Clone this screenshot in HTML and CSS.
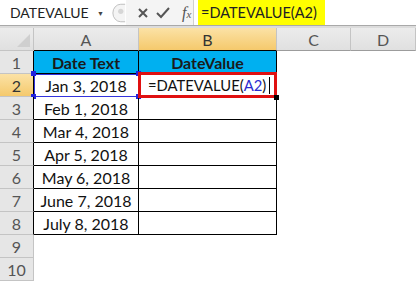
FILE: index.html
```html
<!DOCTYPE html>
<html lang="en">
<head>
    <meta charset="UTF-8">
    <title>DATEVALUE</title>
    <link rel="stylesheet" href="styles.css">
</head>
<body>

<div class="formula-bar">
    <div class="name-box">
        <span>DATEVALUE</span>
        <span class="arrow">&#9660;</span>
    </div>
    <div class="grip">
        <svg width="16" height="22" viewBox="0 0 16 22">
            <path d="M15 1 H10 A9 10 0 0 0 10 21 H15" fill="#f4f4f4" stroke="#b8b8b8"/>
            <circle cx="10" cy="9" r="3" fill="#d6d6d6"/>
        </svg>
    </div>
    <div class="tools">
        <svg class="ico" width="12" height="12" viewBox="0 0 12 12">
            <path d="M2 2 L10 10 M10 2 L2 10" stroke="#555" stroke-width="2"/>
        </svg>
        <svg class="ico" width="14" height="12" viewBox="0 0 14 12">
            <path d="M1 6 L5 10 L13 1" stroke="#555" stroke-width="2" fill="none"/>
        </svg>
        <span class="fx">f<small>x</small></span>
    </div>
    <div class="formula">
        <span class="hl">=DATEVALUE(A2)</span>
    </div>
</div>
<div class="gap"></div>

<div class="sheet">
    <div class="corner"></div>
    <div class="ch edge">A</div>
    <div class="ch sel edge">B</div>
    <div class="ch">C</div>
    <div class="ch">D</div>

    <div class="rh edge">1</div>
    <div class="cell t hd">Date Text</div>
    <div class="cell t hd">DateValue</div>
    <div class="cell"></div>
    <div class="cell"></div>

    <div class="rh sel edge">2</div>
    <div class="cell t ref">Jan 3, 2018
        <i class="dot tl"></i><i class="dot tr"></i><i class="dot bl"></i><i class="dot br"></i>
    </div>
    <div class="cell t active">=DATEVALUE(<span class="blue">A2</span>)<span class="caret"></span>
        <i class="handle"></i>
    </div>
    <div class="cell"></div>
    <div class="cell"></div>

    <div class="rh edge">3</div>
    <div class="cell t">Feb 1, 2018</div>
    <div class="cell t"></div>
    <div class="cell"></div>
    <div class="cell"></div>

    <div class="rh edge">4</div>
    <div class="cell t">Mar 4, 2018</div>
    <div class="cell t"></div>
    <div class="cell"></div>
    <div class="cell"></div>

    <div class="rh edge">5</div>
    <div class="cell t">Apr 5, 2018</div>
    <div class="cell t"></div>
    <div class="cell"></div>
    <div class="cell"></div>

    <div class="rh edge">6</div>
    <div class="cell t">May 6, 2018</div>
    <div class="cell t"></div>
    <div class="cell"></div>
    <div class="cell"></div>

    <div class="rh edge">7</div>
    <div class="cell t">June 7, 2018</div>
    <div class="cell t"></div>
    <div class="cell"></div>
    <div class="cell"></div>

    <div class="rh edge">8</div>
    <div class="cell t">July 8, 2018</div>
    <div class="cell t"></div>
    <div class="cell"></div>
    <div class="cell"></div>

    <div class="rh">9</div>
    <div class="cell"></div>
    <div class="cell"></div>
    <div class="cell"></div>
    <div class="cell"></div>

    <div class="rh">10</div>
    <div class="cell"></div>
    <div class="cell"></div>
    <div class="cell"></div>
    <div class="cell"></div>
</div>

</body>
</html>
```

FILE: styles.css
```css
body, html {
    margin: 0;
    padding: 0;
    background: #fff;
    font-family: 'Lato', 'Liberation Sans', sans-serif;
    color: #111;
    overflow: hidden;
}

.formula-bar {
    display: flex;
    height: 26px;
    box-sizing: border-box;
    border-bottom: 1px solid #a9a9a9;
    background: #fff;
}

.name-box {
    width: 112px;
    display: flex;
    align-items: center;
    justify-content: space-between;
    padding: 0 8px 0 10px;
    box-sizing: border-box;
    font-size: 14px;
    color: #222;
}

.name-box .arrow {
    font-size: 7px;
    color: #444;
}

.grip {
    width: 14px;
    display: flex;
    align-items: center;
}

.tools {
    width: 67px;
    display: flex;
    align-items: center;
    gap: 7px;
    padding-left: 11px;
    box-sizing: border-box;
    background: #f4f4f4;
}

.fx {
    font-family: 'Liberation Serif', serif;
    font-style: italic;
    font-size: 16px;
    color: #555;
    margin-left: 5px;
}

.fx small {
    font-size: 11px;
}

.formula {
    flex: 1;
    padding-left: 4px;
    display: flex;
    border-left: 1px solid #d0d0d0;
}

.hl {
    background: #ffff00;
    width: 124px;
    padding-left: 3px;
    line-height: 25px;
    font-size: 14.5px;
    color: #222;
}

.gap {
    height: 2px;
    background: #dcdcdc;
}

.sheet {
    display: grid;
    grid-template-columns: 34px 105px 138px 74px 1fr;
    grid-auto-rows: 23px;
}

.sheet > div {
    box-sizing: border-box;
    position: relative;
}

.corner, .ch, .rh {
    background: linear-gradient(#ececec, #e0e0e0);
    border-right: 1px solid #c4c4c4;
    border-bottom: 1px solid #c4c4c4;
    color: #555;
    font-size: 16px;
    text-align: center;
    line-height: 23px;
}

.rh {
    background: #e6e6e6;
}

.ch {
    border-bottom-color: #9c9c9c;
}

.corner::after {
    content: "";
    position: absolute;
    right: 3px;
    bottom: 3px;
    border-left: 13px solid transparent;
    border-bottom: 13px solid #cfcfcf;
}

.sel {
    background: linear-gradient(#fbe2a6, #f5c96c);
    color: #333;
}

.rh.edge {
    border-right-color: #000;
}

.ch.edge {
    border-bottom-color: #000;
}

.cell {
    font-size: 16px;
    line-height: 23px;
    text-align: center;
    white-space: nowrap;
}

.t {
    border-right: 1px solid #000;
    border-bottom: 1px solid #000;
}

.hd {
    background: #00b0f0;
    font-weight: bold;
    color: #1a1a1a;
}

.ref {
    outline: 1px solid #3333dd;
    outline-offset: -1px;
}

.dot {
    position: absolute;
    width: 5px;
    height: 5px;
    background: #2222dd;
}

.dot.tl { left: -3px; top: -3px; }
.dot.tr { right: -3px; top: -3px; }
.dot.bl { left: -3px; bottom: -3px; }
.dot.br { right: -3px; bottom: -3px; }

.active {
    text-align: left;
    padding-left: 9px;
    font-size: 14.8px;
    z-index: 2;
}

.active::before {
    content: "";
    position: absolute;
    left: -1px;
    top: -2px;
    right: -1px;
    bottom: -2px;
    border: 3px solid #e01010;
}

.blue {
    color: #2b2bd0;
}

.caret {
    display: inline-block;
    width: 1px;
    height: 17px;
    background: #000;
    margin-left: 3px;
    vertical-align: -3px;
}

.handle {
    position: absolute;
    right: -3px;
    bottom: -4px;
    width: 5px;
    height: 5px;
    background: #000;
}
```
